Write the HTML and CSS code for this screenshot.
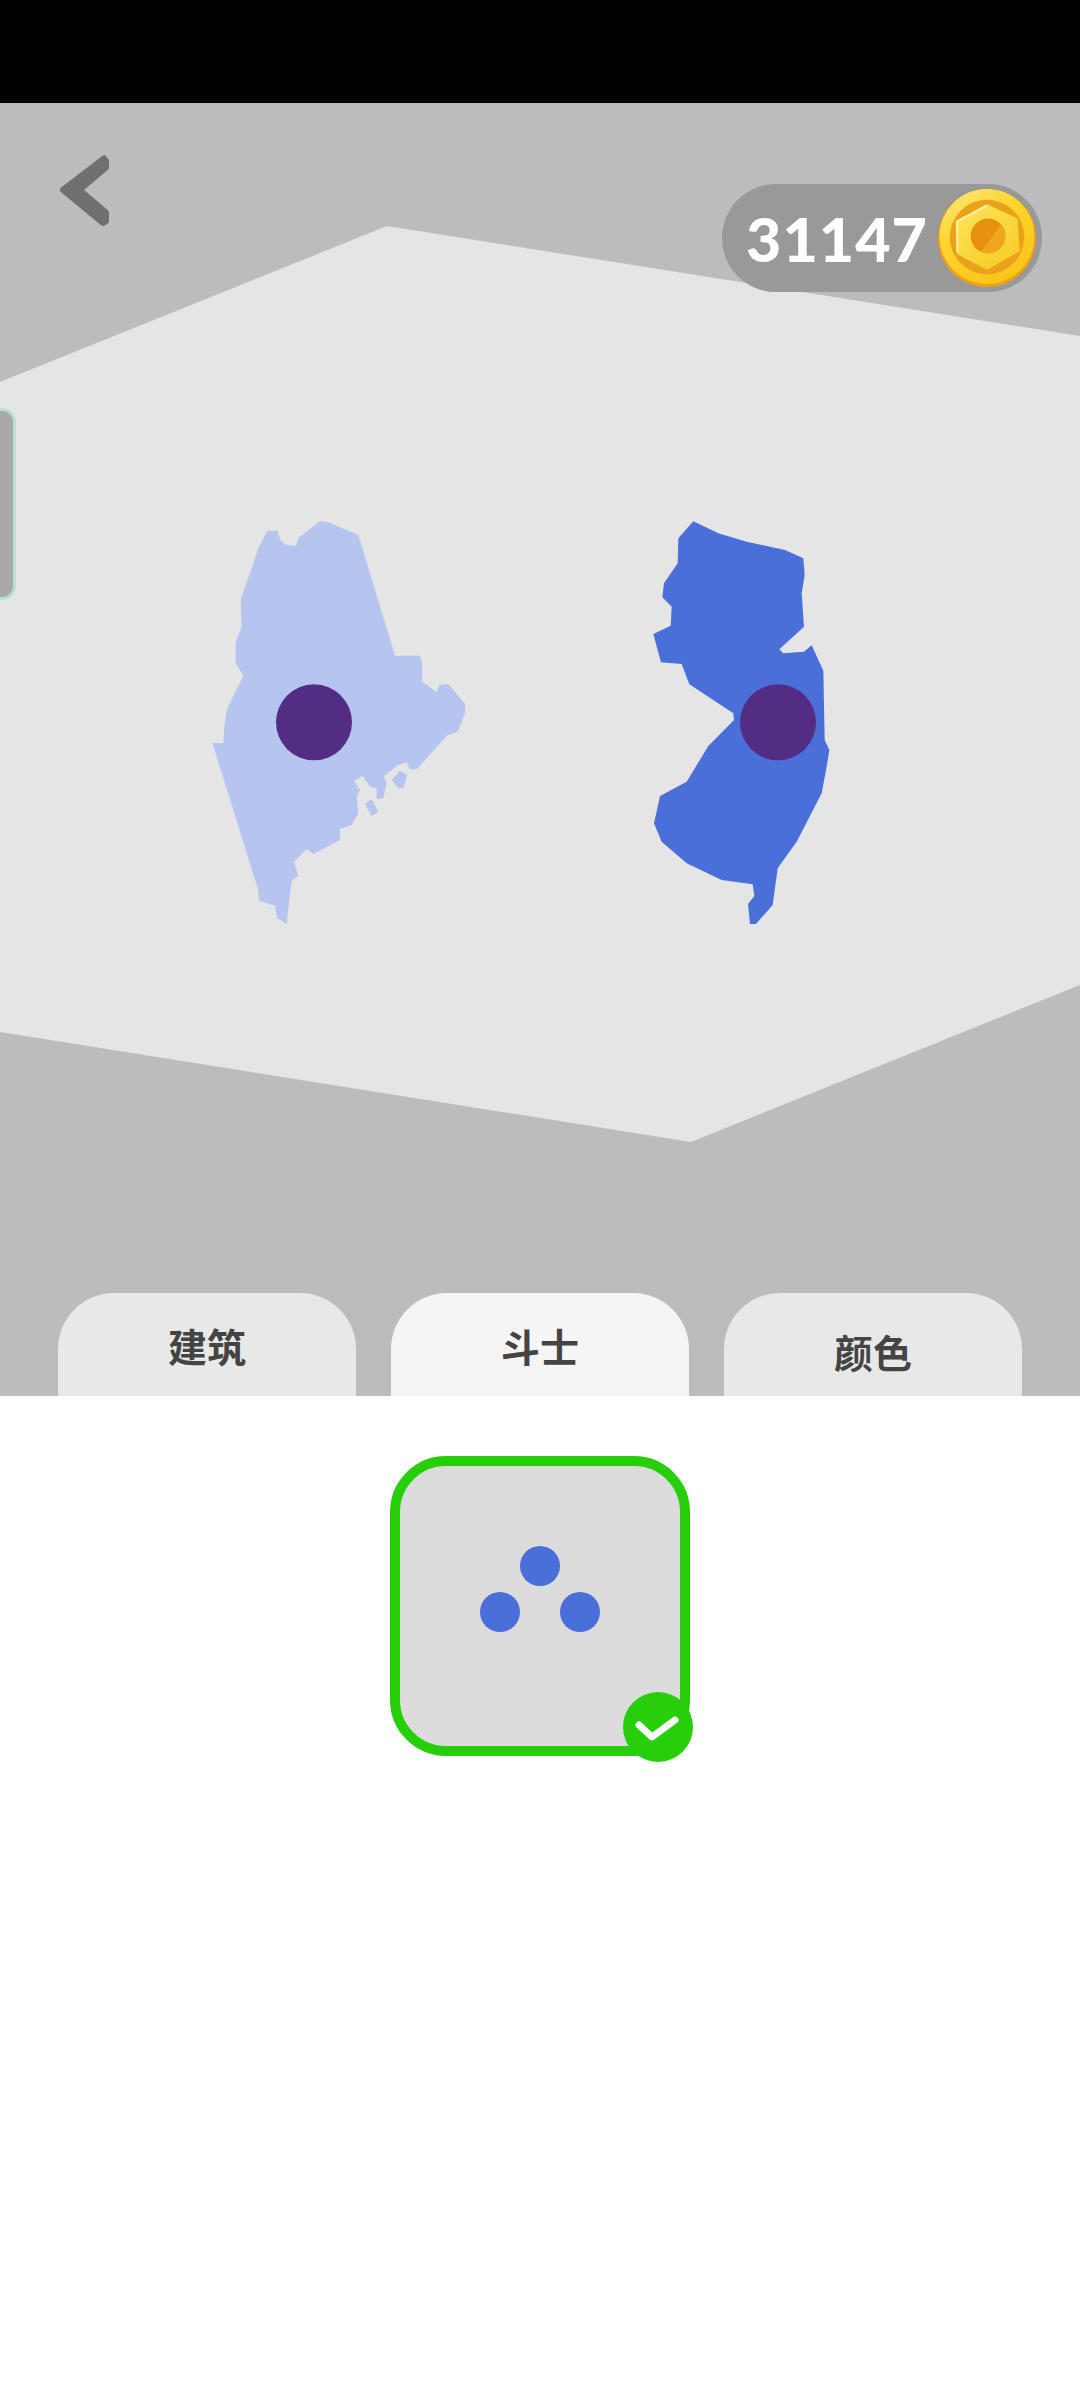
FILE: index.html
```html
<!DOCTYPE html>
<html lang="zh">
<head>
<meta charset="utf-8">
<title>斗士</title>
<link rel="stylesheet" href="styles.css">
</head>
<body>
<div class="statusbar"></div>
<main class="arena">
  <svg class="board" viewBox="0 0 1080 1293" aria-hidden="true">
    <polygon class="board-panel" points="0,279 387,123 1080,233 1080,882 691,1039 0,929"/>
    <g transform="translate(190 397) scale(.33333)">
      <path class="state-maine" d="M232 92 262 92 272 122 290 135 318 138 325 115 390 63 420 68 505 105 615 467 690 467 697 490 697 545 740 577 748 555 775 552 825 612 825 640 803 695 770 707 680 808 660 808 650 787 625 795 582 828 590 848 580 895 560 897 560 865 540 860 518 828 492 843 510 870 500 890 505 940 485 975 450 987 450 1020 370 1062 350 1047 312 1085 325 1128 305 1142 290 1272 262 1255 255 1217 208 1203 203 1165 67 728 100 730 103 680 110 630 160 527 137 490 137 425 155 380 152 300 205 145Z M545 897 565 935 545 948 525 912Z M605 840 630 812 652 825 640 865 625 865Z"/>
      <circle class="fighter" cx="372" cy="667" r="114"/>
    </g>
    <g transform="translate(630 397) scale(.33333)">
      <path class="state-jersey" d="M190 64 265 100 350 125 465 150 520 175 524 225 515 280 522 380 448 448 460 460 522 455 545 436 580 512 584 720 598 750 590 800 575 880 500 1025 443 1105 428 1215 378 1272 360 1272 354 1212 373 1188 368 1153 275 1140 170 1090 95 1025 72 970 90 888 170 845 235 738 312 660 310 640 178 553 155 492 93 487 70 402 122 377 125 320 97 292 102 250 143 190 145 115Z"/>
      <circle class="fighter" cx="444" cy="667" r="114"/>
    </g>
  </svg>

  <div class="side-drawer"></div>

  <header class="topbar">
    <svg class="back" viewBox="0 0 52 76" aria-label="返回">
      <path d="M5 37 46 5.5 48 8 48 14.5 21.5 37 48 59.5 48 68 45 70Z"/>
    </svg>
    <div class="wallet">
      <span class="wallet-count">31147</span>
      <svg class="coin" viewBox="0 0 96 96" aria-hidden="true">
        <defs>
          <linearGradient id="coinRim" x1="0.15" y1="0.1" x2="0.7" y2="1">
            <stop offset="0" stop-color="#fbe46a"/>
            <stop offset="0.35" stop-color="#fdd52e"/>
            <stop offset="1" stop-color="#fac41a"/>
          </linearGradient>
          <linearGradient id="coinNut" x1="0.1" y1="0" x2="0.9" y2="1">
            <stop offset="0" stop-color="#fbe35c"/>
            <stop offset="1" stop-color="#f8cb22"/>
          </linearGradient>
        </defs>
        <circle cx="48" cy="48" r="48" fill="#f0a010"/>
        <circle cx="48" cy="46.5" r="46.5" fill="url(#coinRim)"/>
        <circle cx="48" cy="47" r="36.5" fill="#e9a21a"/>
        <polygon points="48,15 78,29 80,61 48,79 19,64 18,31" fill="url(#coinNut)"/>
        <polyline class="coin-shine" points="19,62 18.5,32 48,16"/>
        <circle cx="49" cy="46" r="17" fill="#e8900f"/>
        <path d="M62 35A17 17 0 0 1 42 61.5Z" fill="#efa81e"/>
      </svg>
    </div>
  </header>

  <nav class="tabs">
    <div class="tab">建筑</div>
    <div class="tab tab-active">斗士</div>
    <div class="tab tab-low">颜色</div>
  </nav>
</main>

<section class="tray">
  <div class="tile">
    <svg class="tile-art" viewBox="0 0 280 280" aria-hidden="true">
      <circle cx="140" cy="100" r="20"/>
      <circle cx="100" cy="146" r="20"/>
      <circle cx="180" cy="146" r="20"/>
    </svg>
    <svg class="tile-badge" viewBox="0 0 70 70" aria-label="已选择">
      <circle cx="35" cy="35" r="35"/>
      <path d="M16 33 29 45 52 28"/>
    </svg>
  </div>
</section>
</body>
</html>
```
FILE: styles.css
```css
html, body {
  margin: 0;
  padding: 0;
  background: #fff;
}

body {
  width: 1080px;
  height: 2400px;
  overflow: hidden;
  display: flex;
  flex-direction: column;
  font-family: "Lato", "Noto Sans CJK SC", sans-serif;
}

.statusbar {
  height: 103px;
  background: #000;
  flex: none;
}

.arena {
  position: relative;
  height: 1293px;
  flex: none;
  background: #bcbcbc;
  display: flex;
  flex-direction: column;
  justify-content: space-between;
  overflow: hidden;
}

.board {
  position: absolute;
  inset: 0;
  width: 1080px;
  height: 1293px;
}

.board-panel { fill: #e5e5e5; }
.state-maine { fill: #b5c5ef; }
.state-jersey { fill: #4a6fd9; }
.fighter { fill: #532c83; }

.side-drawer {
  position: absolute;
  left: -16px;
  top: 305px;
  width: 26px;
  height: 186px;
  background: #a9a9a9;
  border: 3px solid #b9e0d5;
  border-radius: 14px;
}

.topbar {
  position: relative;
  display: flex;
  justify-content: space-between;
  align-items: flex-start;
  padding: 50px 38px 0 58px;
}

.back {
  width: 52px;
  height: 76px;
}

.back path {
  fill: #707070;
  stroke: #707070;
  stroke-width: 6;
  stroke-linejoin: round;
}

.wallet {
  width: 320px;
  height: 108px;
  margin-top: 31px;
  box-sizing: border-box;
  padding: 0 6px 0 24px;
  display: flex;
  align-items: center;
  justify-content: space-between;
  background: #999;
  border-radius: 54px;
}

.wallet-count {
  color: #fff;
  font-size: 61px;
  font-weight: 900;
  line-height: 1;
  letter-spacing: 1px;
}

.coin {
  width: 98px;
  height: 98px;
}

.coin-shine {
  fill: none;
  stroke: #fdf0a0;
  stroke-width: 2;
}

.tabs {
  position: relative;
  display: flex;
  gap: 35px;
  padding: 0 58px;
}

.tab {
  width: 298px;
  height: 103px;
  box-sizing: border-box;
  padding-top: 30px;
  background: #e8e8e8;
  border-radius: 56px 56px 0 0;
  color: #444;
  font-family: "Noto Sans CJK SC", sans-serif;
  font-size: 39px;
  font-weight: 700;
  line-height: 45px;
  text-align: center;
}

.tab-active { background: #f5f5f5; }
.tab-low { padding-top: 36px; }

.tray {
  flex: 1;
  background: #fff;
  display: flex;
  justify-content: center;
  align-items: flex-start;
  padding-top: 60px;
}

.tile {
  position: relative;
  width: 280px;
  height: 280px;
  background: #dcdcdc;
  border: 10px solid #27cf0a;
  border-radius: 56px;
}

.tile-art {
  display: block;
  width: 280px;
  height: 280px;
}

.tile-art circle { fill: #4a6fd9; }

.tile-badge {
  position: absolute;
  left: 223px;
  top: 226px;
  width: 70px;
  height: 70px;
}

.tile-badge circle { fill: #27cf0a; }

.tile-badge path {
  fill: none;
  stroke: #fff;
  stroke-width: 7;
  stroke-linecap: round;
  stroke-linejoin: round;
}
```
